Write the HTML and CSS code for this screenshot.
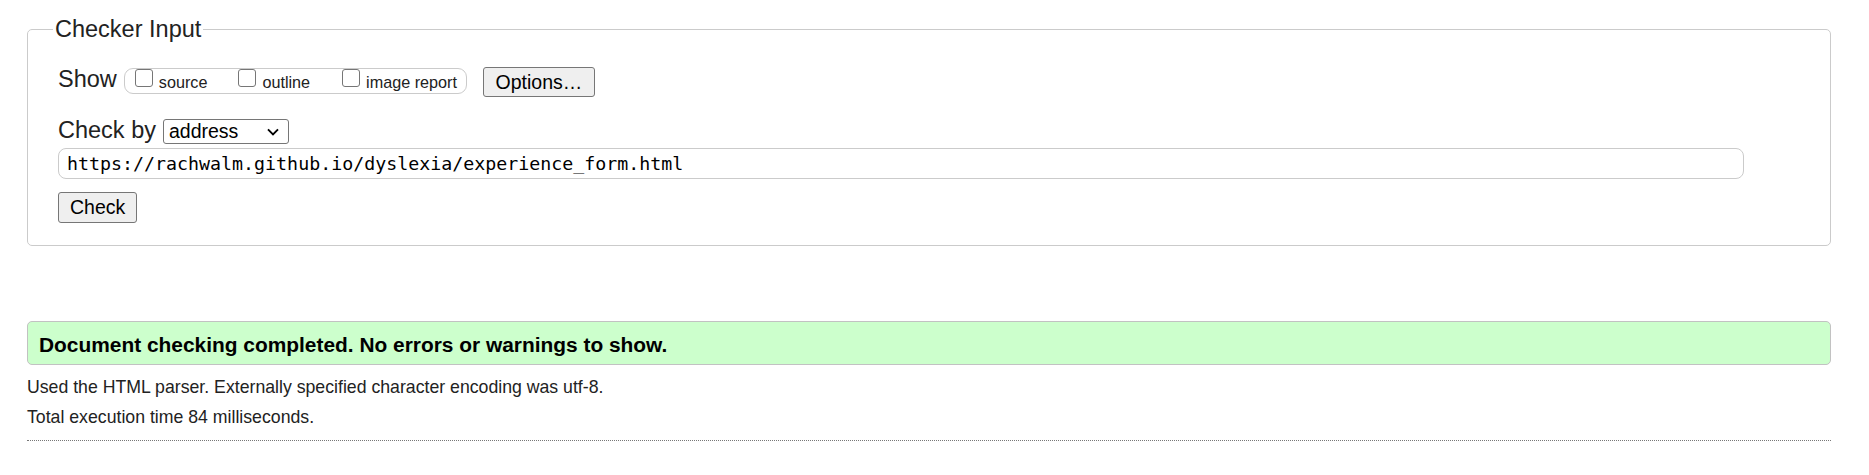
FILE: index.html
```html
<!DOCTYPE html>
<html lang="en">
<head>
<meta charset="utf-8">
<title>Checker</title>
<link rel="stylesheet" href="styles.css">
</head>
<body>
<div class="page">
  <form class="checker">
    <fieldset class="input-set">
      <legend class="legend">Checker Input</legend>
      <div class="row row-show">
        <span class="row-label">Show</span>
        <span class="show-box">
          <label class="opt"><input type="checkbox" class="cb"><span class="opt-text">source</span></label>
          <label class="opt opt-outline"><input type="checkbox" class="cb"><span class="opt-text">outline</span></label>
          <label class="opt opt-image"><input type="checkbox" class="cb"><span class="opt-text">image report</span></label>
        </span>
        <button type="button" class="btn btn-options">Options…</button>
      </div>
      <div class="row row-by">
        <span class="row-label label-by">Check by</span>
        <select class="by-select"><option>address</option></select>
      </div>
      <div class="row row-url">
        <input class="url" type="text" value="https://rachwalm.github.io/dyslexia/experience_form.html">
      </div>
      <div class="row row-check">
        <button type="button" class="btn btn-check">Check</button>
      </div>
    </fieldset>
  </form>
  <div class="success">
    <h2 class="success-text">Document checking completed. No errors or warnings to show.</h2>
  </div>
  <p class="details details-first">Used the HTML parser. Externally specified character encoding was utf-8.</p>
  <p class="details">Total execution time 84 milliseconds.</p>
  <hr class="rule">
</div>
</body>
</html>
```

FILE: styles.css
```css
html, body {
  margin: 0;
  padding: 0;
  background: #fff;
}

body {
  font-family: "Liberation Sans", Arial, sans-serif;
  color: #222;
}

.page {
  padding: 16px 0 0 27px;
  width: 1804px;
}

.checker {
  margin: 0;
}

.input-set {
  box-sizing: border-box;
  width: 1804px;
  margin: 0;
  min-inline-size: 0;
  padding: 25px 0 22px 30px;
  border: 1px solid #cbcbcb;
  border-radius: 5px;
}

.legend {
  font-size: 23.5px;
  line-height: 26px;
  padding: 0 2px;
  margin-left: -5px;
  color: #222;
}

.row {
  display: flex;
  align-items: flex-start;
}

.row-label {
  font-size: 23.5px;
  line-height: 24px;
  color: #222;
}

.row-show .row-label {
  margin-right: 7px;
}

.show-box {
  box-sizing: border-box;
  display: inline-flex;
  align-items: flex-start;
  height: 26px;
  margin-top: 1px;
  padding: 0 9px 0 10px;
  border: 1px solid #cbcbcb;
  border-radius: 9px;
}

.opt {
  display: inline-flex;
  align-items: flex-start;
}

.opt-outline {
  margin-left: 31px;
}

.opt-image {
  margin-left: 32px;
}

.cb {
  appearance: none;
  -webkit-appearance: none;
  box-sizing: border-box;
  width: 18px;
  height: 18px;
  margin: 0;
  border: 1px solid #767676;
  border-radius: 3px;
  background: #fff;
}

.opt-text {
  margin-left: 6px;
  margin-top: 4px;
  font-size: 16.2px;
  line-height: 19px;
  color: #222;
}

.btn {
  box-sizing: border-box;
  font-family: "Liberation Sans", Arial, sans-serif;
  color: #000;
  background: #efefef;
  border: 1px solid #767676;
  border-radius: 3px;
  padding: 0 11px;
  margin: 0;
}

.btn-options {
  margin-left: 16px;
  height: 30px;
  width: 112px;
  font-size: 19.5px;
}

.row-by {
  margin-top: 22px;
}

.label-by {
  margin-top: -1px;
  margin-right: 7px;
}

.by-select {
  appearance: none;
  -webkit-appearance: none;
  box-sizing: border-box;
  width: 126px;
  height: 25px;
  margin: 0;
  padding: 0 0 0 5px;
  font-family: "Liberation Sans", Arial, sans-serif;
  font-size: 19.5px;
  line-height: 23px;
  color: #000;
  background-color: #fff;
  background-image: url("data:image/svg+xml,%3Csvg xmlns='http://www.w3.org/2000/svg' width='12' height='8' viewBox='0 0 12 8'%3E%3Cpath d='M1 1.3l5 5 5-5' fill='none' stroke='%23000' stroke-width='1.9'/%3E%3C/svg%3E");
  background-repeat: no-repeat;
  background-position: right 9px center;
  border: 1px solid #767676;
  border-radius: 3px;
}

.row-url {
  margin-top: 4px;
}

.url {
  box-sizing: border-box;
  width: 1686px;
  height: 31px;
  margin: 0;
  padding: 0 8px;
  font-family: "DejaVu Sans Mono", "Liberation Mono", monospace;
  font-size: 18.3px;
  color: #000;
  background: #fff;
  border: 1px solid #cbcbcb;
  border-radius: 8px;
  outline: none;
}

.row-check {
  margin-top: 13px;
}

.btn-check {
  height: 31px;
  width: 79px;
  font-size: 19.5px;
}

.success {
  box-sizing: border-box;
  margin-top: 75px;
  width: 1804px;
  background: #ccffcc;
  border: 1px solid #c2c2c2;
  border-radius: 5px;
  padding: 11px 10px 7px 11px;
}

.success-text {
  margin: 0;
  font-size: 20.9px;
  line-height: 24px;
  font-weight: bold;
  color: #000;
}

.details {
  margin: 10px 0 0;
  font-size: 17.7px;
  line-height: 20px;
  color: #222;
}

.details-first {
  margin-top: 12px;
}

.rule {
  margin: 13px 0 0;
  width: 1804px;
  height: 0;
  border: 0;
  border-top: 1px dotted #777;
}
```
